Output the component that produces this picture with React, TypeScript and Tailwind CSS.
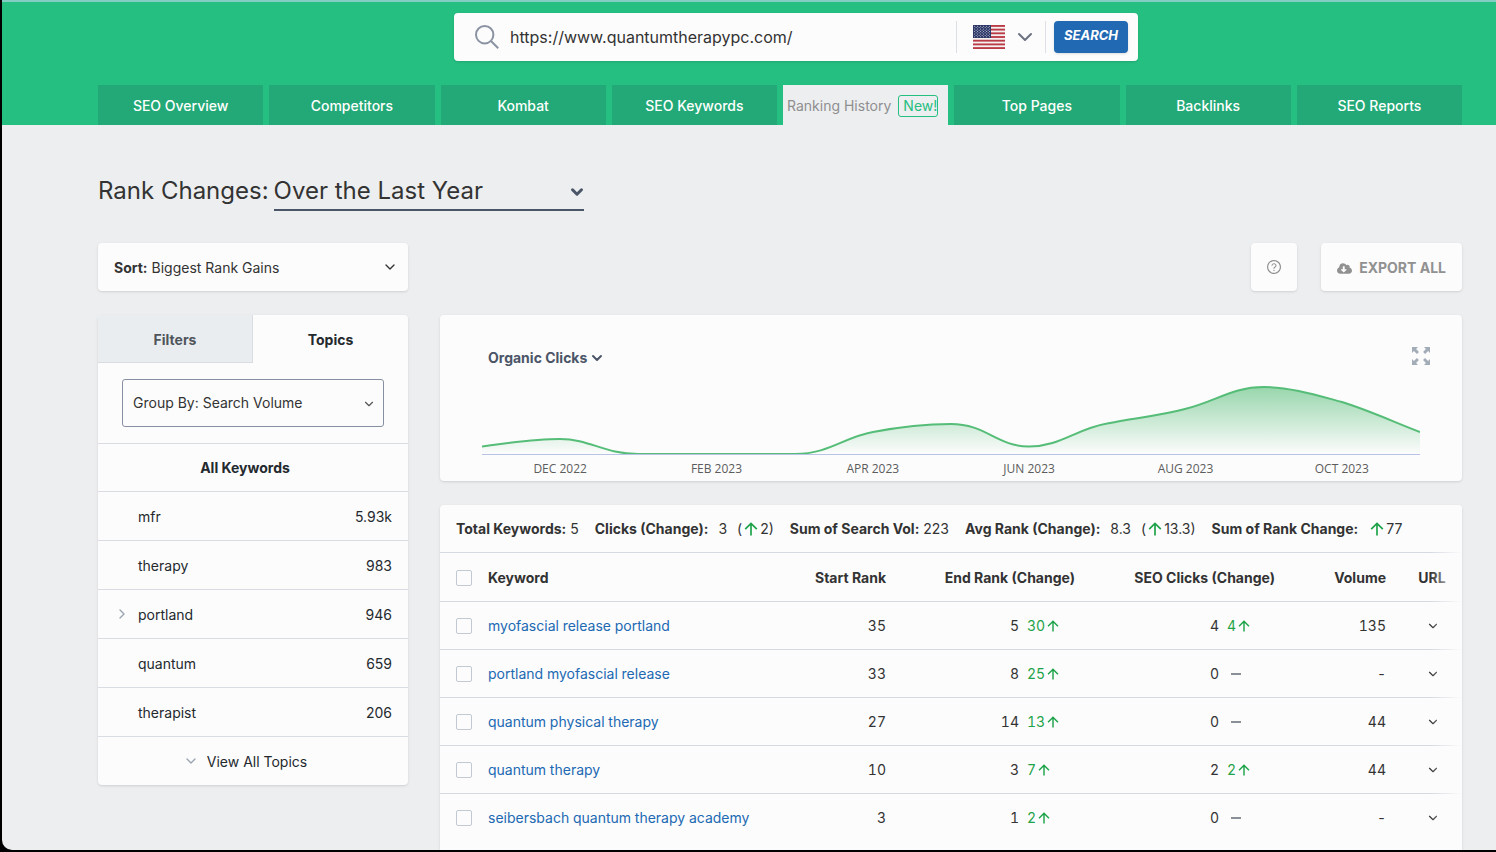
import { FiChevronDown, FiChevronRight } from "react-icons/fi"
import { FaCloudDownloadAlt } from "react-icons/fa"
import { AiOutlineQuestionCircle } from "react-icons/ai"

const tabs = ["SEO Overview", "Competitors", "Kombat", "SEO Keywords", "Ranking History", "Top Pages", "Backlinks", "SEO Reports"]

const topics = [
  { name: "mfr", volume: "5.93k" },
  { name: "therapy", volume: "983" },
  { name: "portland", volume: "946", nested: true },
  { name: "quantum", volume: "659" },
  { name: "therapist", volume: "206" },
]

const months = ["DEC 2022", "FEB 2023", "APR 2023", "JUN 2023", "AUG 2023", "OCT 2023"]

const keywords = [
  { keyword: "myofascial release portland", start: 35, end: 5, gain: 30, clicks: 4, clickGain: 4, volume: "135" },
  { keyword: "portland myofascial release", start: 33, end: 8, gain: 25, clicks: 0, clickGain: 0, volume: "-" },
  { keyword: "quantum physical therapy", start: 27, end: 14, gain: 13, clicks: 0, clickGain: 0, volume: "44" },
  { keyword: "quantum therapy", start: 10, end: 3, gain: 7, clicks: 2, clickGain: 2, volume: "44" },
  { keyword: "seibersbach quantum therapy academy", start: 3, end: 1, gain: 2, clicks: 0, clickGain: 0, volume: "-" },
]

const curve =
  "M0 71.5C26 68 52 64 78 64C108 64 122 79 156 79L313 79C347 79 362 62 391 57C417 52 443 49 469 49C504 49 515 71.5 547 71.5C578 71.5 594 54 625 48.5C651 43 677 41 703 34C735 26 750 12 782 12C808 12 834 20 860 27C886 35 912 47 938 57"

const UpArrow = ({ className }: { className: string }) => (
  <svg viewBox="0 0 14 14" className={className} fill="none" stroke="#1fa34a" strokeWidth="1.7">
    <path d="M7 13.5V1.5M1.2 7.2L7 1.4L12.8 7.2" />
  </svg>
)

const SearchIcon = () => (
  <svg viewBox="0 0 24 24" className="h-6 w-6" fill="none" stroke="#8b93a3" strokeWidth="2">
    <circle cx="9.7" cy="9.7" r="8.7" />
    <path d="M16 16L23.2 23.2" />
  </svg>
)

const Flag = () => (
  <svg viewBox="0 0 32 24" className="h-6 w-8">
    <rect width="32" height="24" fill="#f5f1f1" />
    {[0, 2, 4, 6, 8, 10, 12].map((i) => (
      <rect key={i} y={(i * 24) / 13} width="32" height={24 / 13} fill="#b93a45" />
    ))}
    <rect width="18" height="13" fill="#2c3767" />
    {[0, 1, 2, 3, 4, 5, 6, 7, 8].map((row) =>
      [0, 1, 2, 3, 4, 5].slice(row % 2).map((col) => (
        <circle key={`${row}-${col}`} cx={1.6 + col * 3 - (row % 2) * 1.5} cy={1.3 + row * 1.3} r="0.5" fill="#d5d9e8" />
      ))
    )}
  </svg>
)

const ExpandIcon = () => (
  <svg viewBox="0 0 18 18" className="h-[18px] w-[18px]" fill="#a3adb8">
    {[0, 90, 180, 270].map((deg) => (
      <path key={deg} transform={`rotate(${deg} 9 9)`} d="M0 0H6L4.1 1.9L7 4.9L5 6.9L1.9 4.1L0 6Z" />
    ))}
  </svg>
)

const Checkbox = ({ label }: { label: string }) => (
  <input
    type="checkbox"
    aria-label={label}
    className="block h-4 w-4 appearance-none rounded-[2px] border border-[#c3c9d4] bg-[#fcfcfc]"
  />
)

const Header = () => (
  <header className="border-t-2 border-[#84cdc4] bg-[#25bf81] pt-[11px] pr-[2px] pl-24">
    <form className="mx-auto flex h-12 w-[684px] max-w-full items-center rounded bg-[#fcfcfc] pr-[10px] pl-[21px] shadow-sm">
      <SearchIcon />
      <input
        aria-label="Domain"
        defaultValue="https://www.quantumtherapypc.com/"
        className="ml-[11px] min-w-0 flex-1 bg-transparent text-base text-[#333] outline-none"
      />
      <button type="button" aria-label="Country" className="flex h-8 w-[90px] items-center gap-2 border-x border-[#dcdfe6] pl-4">
        <Flag />
        <FiChevronDown className="h-6 w-6 text-[#6b7280]" />
      </button>
      <button type="button" className="ml-2 h-8 w-[74px] rounded bg-[#2169b3] pb-[2px] text-[13px] font-bold text-white italic shadow-sm">
        SEARCH
      </button>
    </form>
    <nav className="mt-6 mr-8 grid grid-cols-8 gap-[6px]">
      {tabs.map((tab) =>
        tab === "Ranking History" ? (
          <a key={tab} href="#" className="flex h-10 items-center gap-[7px] bg-[#edeef0] pt-[2px] pl-1 text-sm whitespace-nowrap text-[#8f8f8f]">
            {tab}
            <span className="rounded-[3px] border border-[#25bf81] pl-1 text-[#25bf81]">New!</span>
          </a>
        ) : (
          <a key={tab} href="#" className="flex h-10 items-center justify-center bg-[#23a977] pt-[2px] text-sm font-medium whitespace-nowrap text-white">
            {tab}
          </a>
        )
      )}
    </nav>
  </header>
)

const Sidebar = () => (
  <aside className="w-[310px] shrink-0 self-start rounded bg-[#fcfcfc] text-sm text-[#24292e] shadow">
    <div className="grid h-12 grid-cols-2 font-bold">
      <button type="button" className="rounded-tl border-r border-b border-[#d9dde2] bg-[#e9edf0] pt-[2px] text-[#50555c]">Filters</button>
      <button type="button" className="pt-[2px]">Topics</button>
    </div>
    <div className="relative px-6 py-4">
      <select aria-label="Group by" className="h-12 w-full appearance-none rounded-[3px] border border-[#8790a3] pl-[10px] text-[#333]">
        <option>Group By: Search Volume</option>
      </select>
      <FiChevronDown className="pointer-events-none absolute top-[34px] right-8 h-[14px] w-[14px] text-[#555]" />
    </div>
    <h2 className="h-12 border-t border-[#d9dce2] pr-4 text-center leading-12 font-bold">All Keywords</h2>
    <ul>
      {topics.map((topic) => (
        <li key={topic.name} className="flex h-[49px] items-center border-t border-[#d9dce2] pt-[2px] pr-4 pl-4">
          <span className="w-6">{topic.nested && <FiChevronRight className="mb-[2px] h-4 w-4 text-[#9aa5b1]" />}</span>
          <span className="flex-1">{topic.name}</span>
          <span>{topic.volume}</span>
        </li>
      ))}
    </ul>
    <button type="button" className="flex h-[49px] w-full items-center justify-center gap-2 border-t border-[#d9dce2] pt-[2px] pr-4">
      <FiChevronDown className="mb-[2px] h-4 w-4 text-[#9aa5b1]" />
      View All Topics
    </button>
  </aside>
)

const ChartCard = () => (
  <section className="rounded bg-[#fcfcfc] px-[42px] pt-[30px] pb-1 shadow">
    <div className="flex h-[30px] items-start justify-between">
      <button type="button" className="ml-[6px] flex items-center gap-[2px] pt-[3px] text-sm font-bold text-[#4b5567]">
        Organic Clicks
        <FiChevronDown className="h-4 w-4" strokeWidth={3} />
      </button>
      <button type="button" aria-label="Expand chart" className="-mr-[10px] pt-[2px]">
        <ExpandIcon />
      </button>
    </div>
    <svg viewBox="0 0 938 80" preserveAspectRatio="none" className="block h-20 w-full">
      <defs>
        <linearGradient id="clicks" x1="0" y1="12" x2="0" y2="79" gradientUnits="userSpaceOnUse">
          <stop offset="0" stopColor="#55bd77" stopOpacity="0.6" />
          <stop offset="1" stopColor="#55bd77" stopOpacity="0" />
        </linearGradient>
      </defs>
      <path d={`${curve}V79.5H0Z`} fill="url(#clicks)" />
      <path d={curve} fill="none" stroke="#55bd77" strokeWidth="2" />
      <path d="M0 79.5H938" stroke="#b9c4e4" />
    </svg>
    <div className="mt-[6px] grid grid-cols-6 text-center font-['Open_Sans',sans-serif] text-[12px] leading-4 text-[#5c5c5c]">
      {months.map((month) => (
        <span key={month}>{month}</span>
      ))}
    </div>
  </section>
)

const Summary = () => (
  <div className="flex h-12 items-center gap-4 border-b border-[#d5d9e2] pl-4 whitespace-nowrap">
    <p><b>Total Keywords:</b> 5</p>
    <p className="flex items-center">
      <b>Clicks (Change):</b>
      <span className="mx-[10px]">3</span>(
      <UpArrow className="mx-[2px] h-[14px] w-[14px]" />2)
    </p>
    <p><b>Sum of Search Vol:</b> 223</p>
    <p className="flex items-center">
      <b>Avg Rank (Change):</b>
      <span className="mx-[10px]">8.3</span>(
      <UpArrow className="mx-[2px] h-[14px] w-[14px]" />13.3)
    </p>
    <p className="flex items-center">
      <b>Sum of Rank Change:</b>
      <UpArrow className="mr-[2px] ml-3 h-[14px] w-[14px]" />77
    </p>
  </div>
)

const Change = ({ value, change }: { value: number; change: number }) => (
  <div className="flex items-center justify-end">
    {value}
    <span className="ml-2 flex w-12 items-center text-[#1fa34a]">
      {change > 0 ? (
        <>
          {change}
          <UpArrow className="ml-[2px] h-3 w-3" />
        </>
      ) : (
        <span className="ml-1 h-[2px] w-[10px] bg-[#8a9097]" />
      )}
    </span>
  </div>
)

const KeywordTable = () => (
  <section className="relative min-h-0 flex-1 overflow-hidden rounded-t bg-[#fcfcfc] text-sm text-[#333] shadow">
    <Summary />
    <table className="w-full table-fixed text-right whitespace-nowrap">
      <thead>
        <tr className="h-12 border-b border-[#d5d9e2] *:pt-[2px]">
          <th className="w-12 pl-4"><Checkbox label="Select all" /></th>
          <th className="text-left">Keyword</th>
          <th className="w-[120px] pr-4">Start Rank</th>
          <th className="w-[189px] pr-4">End Rank (Change)</th>
          <th className="w-[200px] pr-4">SEO Clicks (Change)</th>
          <th className="w-[111px] pr-4">Volume</th>
          <th className="w-[60px] text-center">URL</th>
        </tr>
      </thead>
      <tbody className="tabular-nums">
        {keywords.map((row) => (
          <tr key={row.keyword} className="h-12 border-b border-[#d5d9e2] *:pt-[2px] last:border-0">
            <td className="pl-4"><Checkbox label={row.keyword} /></td>
            <td className="text-left"><a href="#" className="text-[#2169b3]">{row.keyword}</a></td>
            <td className="pr-4">{row.start}</td>
            <td className="pr-4"><Change value={row.end} change={row.gain} /></td>
            <td className="pr-4"><Change value={row.clicks} change={row.clickGain} /></td>
            <td className="pr-4">{row.volume}</td>
            <td className="pl-[2px]">
              <button type="button" aria-label="Show URL" className="mx-auto block">
                <FiChevronDown className="h-[14px] w-[14px]" />
              </button>
            </td>
          </tr>
        ))}
      </tbody>
    </table>
    <div className="pointer-events-none absolute inset-y-0 right-0 w-8 bg-linear-to-r from-transparent to-[#fcfcfc]" />
  </section>
)

const App = () => {
  return (
    <div className="h-screen bg-black pb-[2px] pl-[2px] font-[Inter,sans-serif]">
      <div className="flex h-full flex-col overflow-hidden rounded-bl-[10px] bg-[#edeef0]">
        <Header />
        <main className="flex min-h-0 flex-1 flex-col pt-12 pr-[34px] pl-24">
          <div className="flex items-center text-2xl text-[#333]">
            <label htmlFor="period" className="mr-[5px] pb-[2px]">Rank Changes:</label>
            <div className="relative">
              <select id="period" className="h-[38px] w-[310px] appearance-none border-b-2 border-[#4a5568]">
                <option>Over the Last Year</option>
              </select>
              <FiChevronDown className="pointer-events-none absolute top-[10px] -right-[2px] h-[18px] w-[18px] text-[#4a5568]" strokeWidth={4} />
            </div>
          </div>
          <div className="mt-8 flex h-12 shrink-0 gap-6 text-sm text-[#333]">
            <div className="relative mr-auto flex w-[310px] items-center rounded bg-[#fcfcfc] pl-4 shadow">
              <label htmlFor="sort" className="mr-1 pt-[2px] font-bold">Sort:</label>
              <select id="sort" className="h-full flex-1 appearance-none pt-[2px]">
                <option>Biggest Rank Gains</option>
              </select>
              <FiChevronDown className="pointer-events-none absolute right-[10px] h-4 w-4" />
            </div>
            <button type="button" aria-label="Help" className="flex w-[46px] items-center justify-center rounded bg-[#fcfcfc] text-[#8f8f8f] shadow">
              <AiOutlineQuestionCircle className="h-4 w-4" />
            </button>
            <button type="button" className="flex items-center gap-[7px] rounded bg-[#fcfcfc] px-4 pt-[2px] font-bold text-[#919191] shadow">
              <FaCloudDownloadAlt className="h-[15px] w-[15px]" />
              EXPORT ALL
            </button>
          </div>
          <div className="mt-6 flex min-h-0 flex-1 gap-8">
            <Sidebar />
            <div className="flex min-w-0 flex-1 flex-col gap-6">
              <ChartCard />
              <KeywordTable />
            </div>
          </div>
        </main>
      </div>
    </div>
  )
}

export default App
